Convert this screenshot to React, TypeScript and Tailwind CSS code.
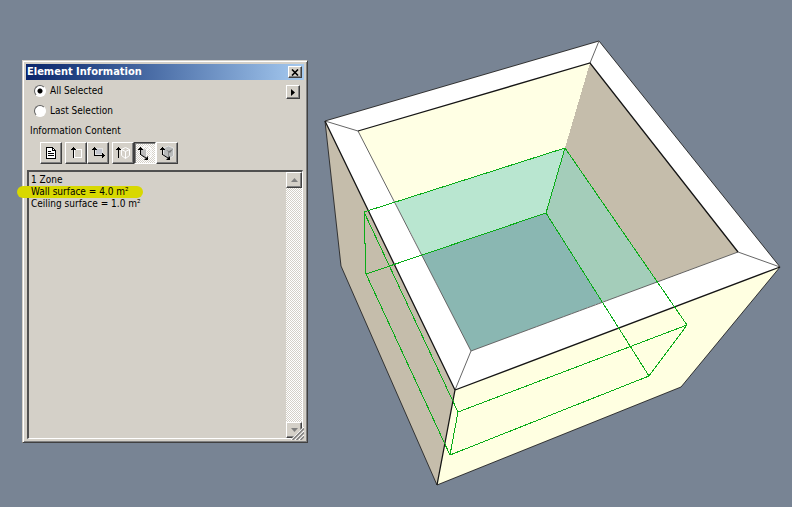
import { useState, type ReactNode } from "react";

const raised =
  "border border-t-white border-l-white border-r-[#404040] border-b-[#404040] bg-[#d4d0c8] shadow-[inset_-1px_-1px_0_#808080]";

function PageIcon() {
  return (
    <svg width="20" height="20" viewBox="0 0 20 20" fill="none" stroke="#000" shapeRendering="crispEdges">
      <path d="M5.5 4.5h6l3 3v8h-9z" fill="#fff" />
      <path d="M11.5 4.5v3h3M7 8.5h3M7 10.5h6M7 12.5h6" />
    </svg>
  );
}

function HeightIcon() {
  return (
    <svg width="20" height="20" viewBox="0 0 20 20" fill="none" stroke="#000" shapeRendering="crispEdges">
      <path d="M8.5 6.5h7v8h-7z" stroke="#fff" />
      <path d="M7.5 4v11M5 6.5h5M6 5.5h3" />
    </svg>
  );
}

function AreaIcon() {
  return (
    <svg width="20" height="20" viewBox="0 0 20 20" fill="none" stroke="#000" shapeRendering="crispEdges">
      <path d="M7.5 5.5h7v6h-7z" fill="#c4c6ce" stroke="#e4e4e4" />
      <path d="M6.5 4v8.5H17M4 6.5h5M5 5.5h3M14.5 10v5M15.5 11v3" />
    </svg>
  );
}

function BoxHeightIcon() {
  return (
    <svg width="20" height="20" viewBox="0 0 20 20" fill="none" stroke="#000">
      <path d="M8.5 6.5l4-2 4 2v6l-4 3-4-3zM8.5 6.5l4 2 4-2M12.5 8.5v7" stroke="#fff" />
      <path d="M5.5 4v11M3 6.5h5M4 5.5h3" shapeRendering="crispEdges" />
    </svg>
  );
}

function WallIcon() {
  return (
    <svg width="20" height="20" viewBox="0 0 20 20" fill="none" stroke="#000">
      <path d="M7 5l4-2 5 2v8l-5 3V7l5-2" stroke="#fff" />
      <path d="M6 5l5 2v8l-5-3z" fill="#bcbcbc" stroke="none" />
      <path d="M5.5 4v8M3 6.5h5M4 5.5h3" shapeRendering="crispEdges" />
      <path d="M5.5 11.5l7 4.500" />
      <path d="M13 13v4H9z" fill="#000" stroke="none" />
    </svg>
  );
}

function VolumeIcon() {
  return (
    <svg width="20" height="20" viewBox="0 0 20 20" fill="none" stroke="#000">
      <path d="M6.500 5l5-2 5 2v8l-5 3-5-4z" fill="#b9bbbb" stroke="#e4e4e4" />
      <path d="M11.500 9v6" stroke="#888" />
      <path d="M9 7l3 1 4-2-3 4z" fill="#777" stroke="none" />
      <path d="M5.5 4v8M3 6.5h5M4 5.5h3" shapeRendering="crispEdges" />
      <path d="M5.5 11.5l7 4.500" />
      <path d="M13 13v4H9z" fill="#000" stroke="none" />
    </svg>
  );
}

function ToolButton(props: { label: string; pressed?: boolean; onClick: () => void; children: ReactNode }) {
  return (
    <button
      type="button"
      aria-label={props.label}
      aria-pressed={props.pressed}
      onClick={props.onClick}
      className={
        props.pressed
          ? "size-[22px] border border-t-[#404040] border-l-[#404040] border-r-white border-b-white bg-[repeating-conic-gradient(#ffffff_0_25%,#d4d0c8_0_50%)] bg-[length:2px_2px] shadow-[inset_1px_1px_0_#808080]"
          : `size-[22px] ${raised}`
      }
    >
      {props.children}
    </button>
  );
}

function ModelView() {
  return (
    <svg viewBox="308 0 484 507" className="min-w-0 flex-1 self-start" role="img" aria-label="Zone inside four walls">
      <g shapeRendering="crispEdges">
        <path d="M325 121L341 266L437 485L455 390Z" fill="#c5bdab" />
        <path d="M455 390L437 485L681 387L780 267Z" fill="#ffffe1" />
        <path d="M325 121L599 41L780 267L455 390Z" fill="#fff" />
        <path d="M358 131L590 63L565 148L395 202Z" fill="#ffffe4" />
        <path d="M590 63L738 252L658 282L565 148Z" fill="#c5bdab" />
        <path d="M395 202L565 148L546 213L422 255Z" fill="#b9e6d0" />
        <path d="M565 148L658 282L602 302L546 213Z" fill="#a4cdba" />
        <path d="M422 255L546 213L602 302L471 351Z" fill="#8ab7b2" />
      </g>
      <g fill="none" stroke="#333">
        <path d="M325 121L599 41L780 267L681 387L437 485L341 266Z" />
        <path d="M325 121L358 131L471 351L455 390M471 351L738 252L780 267M590 63L599 41" stroke="#666" />
        <path d="M325 121L455 390L780 267M455 390L437 485M358 131L590 63L738 252" stroke="#151515" strokeWidth="1.300" />
      </g>
      <g fill="none" stroke="#0aac18" shapeRendering="crispEdges">
        <path d="M364 212L565 148L687 325L458 412Z" />
        <path d="M366 274L546 213L649 376L450 455Z" />
        <path d="M364 212L366 274M565 148L546 213M687 325L649 376M458 412L450 455" />
      </g>
    </svg>
  );
}

const tools = [
  { label: "Height", icon: <HeightIcon /> },
  { label: "Area", icon: <AreaIcon /> },
  { label: "Box height", icon: <BoxHeightIcon /> },
  { label: "Wall surface", icon: <WallIcon /> },
  { label: "Volume", icon: <VolumeIcon /> },
];

export default function App() {
  const [scope, setScope] = useState("all");
  const [tool, setTool] = useState("Wall surface");
  const renderTool = (i: number) => (
    <ToolButton
      key={tools[i].label}
      label={tools[i].label}
      pressed={tool === tools[i].label}
      onClick={() => setTool(tools[i].label)}
    >
      {tools[i].icon}
    </ToolButton>
  );
  const radio =
    "size-3 appearance-none rounded-full border border-t-[#606060] border-l-[#606060] border-r-white border-b-white bg-white checked:bg-[radial-gradient(circle,#000_2px,#fff_3px)]";

  return (
    <main className="flex min-h-screen items-start bg-[#788494] pl-[22px] font-['DejaVu_Sans_Condensed','DejaVu_Sans',sans-serif] text-[10px] text-black">
      <section className="mt-[60px] w-[286px] shrink-0 border border-t-[#d4d0c8] border-l-[#d4d0c8] border-r-[#404040] border-b-[#404040] bg-[#d4d0c8] p-[3px] shadow-[inset_1px_1px_0_#fff,inset_-1px_-1px_0_#808080]">
        <header className="flex h-4 items-center justify-between bg-linear-to-r from-[#0a246a] to-[#a6caf0] pr-0.5 pl-px">
          <h1 className="text-[11px] font-bold text-white">Element Information</h1>
          <button type="button" aria-label="Close" className={`flex h-3 w-[14px] items-center justify-center ${raised}`}>
            <svg width="8" height="7" viewBox="0 0 8 7" stroke="#000" strokeWidth="1.600">
              <path d="M1 .5l6 6M7 .5l-6 6" />
            </svg>
          </button>
        </header>

        <div className="flex justify-between pt-[5px] pr-1 pl-2">
          <fieldset>
            <label className="flex h-5 items-start gap-1">
              <input type="radio" name="scope" className={radio} checked={scope === "all"} onChange={() => setScope("all")} />
              <span className="leading-3">All Selected</span>
            </label>
            <label className="flex h-5 items-start gap-1">
              <input type="radio" name="scope" className={radio} checked={scope === "last"} onChange={() => setScope("last")} />
              <span className="leading-3">Last Selection</span>
            </label>
          </fieldset>
          <button type="button" aria-label="Options" className={`flex size-[14px] items-center justify-center ${raised}`}>
            <svg width="4" height="7" viewBox="0 0 4 7">
              <path d="M0 0v7l4-3.500z" />
            </svg>
          </button>
        </div>

        <h2 className="pl-1 leading-3">Information Content</h2>
        <div className="flex gap-[3px] pt-[5px] pb-1.5 pl-[14px]">
          <button type="button" aria-label="Report" className={`size-[22px] ${raised}`}>
            <PageIcon />
          </button>
          <div className="flex">{[0, 1].map(renderTool)}</div>
          <div className="flex">{[2, 3, 4].map(renderTool)}</div>
        </div>

        <div className="relative mx-px flex h-[269px] justify-between border-t-2 border-l-2 border-t-[#505050] border-l-[#505050] border-r border-b border-r-white border-b-white">
          <ul className="pt-0.5 pl-0.5 leading-3">
            <li>1 Zone</li>
            <li className="relative isolate">
              <span className="pointer-events-none absolute top-0 -left-3.5 -z-10 h-3 w-[126px] rounded-full bg-[#d8d800]" />
              Wall surface = 4.0 m²
            </li>
            <li>Ceiling surface = 1.0 m²</li>
          </ul>
          <div className="flex w-4 flex-col justify-between bg-[repeating-conic-gradient(#ffffff_0_25%,#d4d0c8_0_50%)] bg-[length:2px_2px]">
            <button type="button" aria-label="Scroll up" className={`flex size-4 items-center justify-center ${raised}`}>
              <svg width="7" height="4" viewBox="0 0 7 4" fill="#808080">
                <path d="M0 4h7L3.500 0z" />
              </svg>
            </button>
            <button type="button" aria-label="Scroll down" className={`flex size-4 items-center justify-center ${raised}`}>
              <svg width="7" height="4" viewBox="0 0 7 4" fill="#808080">
                <path d="M0 0h7L3.500 4z" />
              </svg>
            </button>
          </div>
          <svg className="absolute -right-0.5 -bottom-0.5" width="14" height="14" viewBox="0 0 14 14" fill="none">
            <path d="M0 14L14 0V14Z" fill="#d4d0c8" />
            <path d="M1 14L14 1M5 14L14 5M9 14L14 9" stroke="#fff" />
            <path d="M2.500 14L14 2.500M6.500 14L14 6.500M10.500 14L14 10.500" stroke="#808080" strokeWidth="1.500" />
          </svg>
        </div>
      </section>
      <ModelView />
    </main>
  );
}
